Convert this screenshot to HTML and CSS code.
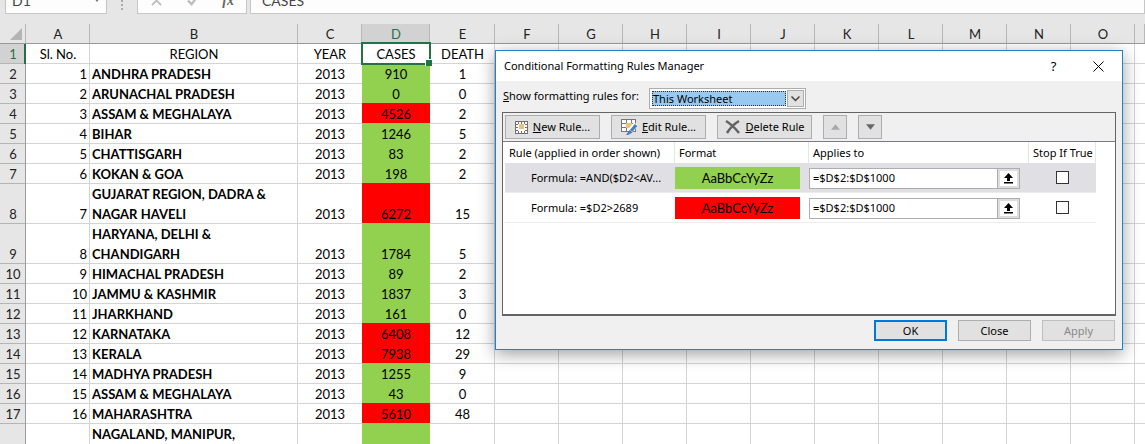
FILE: index.html
```html
<!DOCTYPE html>
<html lang="en">
<head>
<meta charset="utf-8">
<title>Conditional Formatting Rules Manager</title>
<link rel="stylesheet" href="styles.css">
</head>
<body>
<header class="formula-bar">
  <div class="name-box"><span>D1</span><svg class="caret" viewBox="0 0 8 5"><path d="M0 0h8L4 5z" fill="#777"/></svg></div>
  <div class="grip"><i></i><i></i><i></i></div>
  <div class="fx-box">
    <svg viewBox="0 0 12 12"><path d="M1 1l10 10M11 1L1 11" stroke="#bdbdbd" stroke-width="2" fill="none"/></svg>
    <svg viewBox="0 0 12 12"><path d="M1 6l4 4 6-8" stroke="#bdbdbd" stroke-width="2.5" fill="none"/></svg>
    <em>fx</em>
  </div>
  <div class="formula-text">CASES</div>
</header>
<table class="sheet">
  <colgroup><col class="w-head"><col class="w-std"><col class="w-region"><col class="w-std"><col class="w-cases"><col class="w-death"><col class="w-std"><col class="w-std"><col class="w-std"><col class="w-std"><col class="w-std"><col class="w-std"><col class="w-std"><col class="w-std"><col class="w-std"><col class="w-std"><col></colgroup>
  <thead>
    <tr><th class="corner"><svg viewBox="0 0 12 12"><path d="M12 0v12H0z" fill="#b4b4b4"/></svg></th><th>A</th><th>B</th><th>C</th><th class="active">D</th><th>E</th><th>F</th><th>G</th><th>H</th><th>I</th><th>J</th><th>K</th><th>L</th><th>M</th><th>N</th><th>O</th><th></th></tr>
  </thead>
  <tbody>
    <tr class="titles"><th class="active">1</th><td>Sl. No.</td><td>REGION</td><td>YEAR</td><td class="selected">CASES</td><td>DEATH</td><td class="blank" colspan="11"></td></tr>
    <tr><th>2</th><td>1</td><td>ANDHRA PRADESH</td><td>2013</td><td class="low">910</td><td>1</td><td class="blank" colspan="11"></td></tr>
    <tr><th>3</th><td>2</td><td>ARUNACHAL PRADESH</td><td>2013</td><td class="low">0</td><td>0</td><td class="blank" colspan="11"></td></tr>
    <tr><th>4</th><td>3</td><td>ASSAM &amp; MEGHALAYA</td><td>2013</td><td class="high">4526</td><td>2</td><td class="blank" colspan="11"></td></tr>
    <tr><th>5</th><td>4</td><td>BIHAR</td><td>2013</td><td class="low">1246</td><td>5</td><td class="blank" colspan="11"></td></tr>
    <tr><th>6</th><td>5</td><td>CHATTISGARH</td><td>2013</td><td class="low">83</td><td>2</td><td class="blank" colspan="11"></td></tr>
    <tr><th>7</th><td>6</td><td>KOKAN &amp; GOA</td><td>2013</td><td class="low">198</td><td>2</td><td class="blank" colspan="11"></td></tr>
    <tr><th>8</th><td>7</td><td>GUJARAT REGION, DADRA &amp;<br>NAGAR HAVELI</td><td>2013</td><td class="high">6272</td><td>15</td><td class="blank" colspan="11"></td></tr>
    <tr><th>9</th><td>8</td><td>HARYANA, DELHI &amp;<br>CHANDIGARH</td><td>2013</td><td class="low">1784</td><td>5</td><td class="blank" colspan="11"></td></tr>
    <tr><th>10</th><td>9</td><td>HIMACHAL PRADESH</td><td>2013</td><td class="low">89</td><td>2</td><td class="blank" colspan="11"></td></tr>
    <tr><th>11</th><td>10</td><td>JAMMU &amp; KASHMIR</td><td>2013</td><td class="low">1837</td><td>3</td><td class="blank" colspan="11"></td></tr>
    <tr><th>12</th><td>11</td><td>JHARKHAND</td><td>2013</td><td class="low">161</td><td>0</td><td class="blank" colspan="11"></td></tr>
    <tr><th>13</th><td>12</td><td>KARNATAKA</td><td>2013</td><td class="high">6408</td><td>12</td><td class="blank" colspan="11"></td></tr>
    <tr><th>14</th><td>13</td><td>KERALA</td><td>2013</td><td class="high">7938</td><td>29</td><td class="blank" colspan="11"></td></tr>
    <tr><th>15</th><td>14</td><td>MADHYA PRADESH</td><td>2013</td><td class="low">1255</td><td>9</td><td class="blank" colspan="11"></td></tr>
    <tr><th>16</th><td>15</td><td>ASSAM &amp; MEGHALAYA</td><td>2013</td><td class="low">43</td><td>0</td><td class="blank" colspan="11"></td></tr>
    <tr><th>17</th><td>16</td><td>MAHARASHTRA</td><td>2013</td><td class="high">5610</td><td>48</td><td class="blank" colspan="11"></td></tr>
    <tr><th></th><td></td><td>NAGALAND, MANIPUR,<br>&nbsp;</td><td></td><td class="low"></td><td></td><td class="blank" colspan="11"></td></tr>
  </tbody>
</table>

<section class="dialog" role="dialog" aria-labelledby="dlg-title">
  <div class="title-bar">
    <h1 id="dlg-title">Conditional Formatting Rules Manager</h1>
    <button class="plain" type="button">?</button>
    <button class="plain" type="button" aria-label="Close window"><svg class="x" viewBox="0 0 11 11"><path d="M.5 .5l10 10M10.5 .5l-10 10" stroke="#000" fill="none"/></svg></button>
  </div>
  <div class="scope">
    <label for="scope"><u>S</u>how formatting rules for:</label>
    <div class="combo">
      <select id="scope"><option>This Worksheet</option></select>
      <span class="drop"><svg viewBox="0 0 9 6"><path d="M.5 .5l4 4 4-4" stroke="#444" stroke-width="1.500" fill="none"/></svg></span>
    </div>
  </div>
  <div class="panel">
    <div class="toolbar">
      <button class="tool" type="button"><svg class="i13" viewBox="0 0 13 13"><path d="M0 0h13v13H0z" fill="#707070"/><path d="M1 1h2v2H1zM4 1h2v2H4zM7 1h2v2H7zM10 1h2v2h-2zM1 4h2v2H1zM1 7h2v2H1zM1 10h2v2H1zM10 4h2v2h-2zM10 7h2v2h-2zM4 10h2v2H4zM7 10h2v2H7zM10 10h2v2h-2z" fill="#fff"/><path d="M3 3h7v7H3z" fill="#fff"/><path d="M4 3h5v5H4z" fill="#ecc17e"/></svg><span><u>N</u>ew Rule...</span></button>
      <button class="tool" type="button"><svg class="i16" viewBox="0 0 16 16"><path d="M0 0h15v13H0z" fill="#777"/><path d="M1 1h4v3H1zM6 1h4v3H6zM11 1h3v3h-3zM1 5h4v3H1zM1 9h4v3H1zM6 9h4v3H6zM11 5h3v7h-3z" fill="#fff"/><path d="M5 4h6v5H5z" fill="#ecc17e"/><path d="M15 5l-6 7" stroke="#fff" stroke-width="5"/><path d="M15 6l-5 6" stroke="#4a7ebb" stroke-width="3"/><path d="M8.500 11l3 2.500L7 16H5z" fill="#4a7ebb"/></svg><span><u>E</u>dit Rule...</span></button>
      <button class="tool" type="button"><svg class="i16" viewBox="0 0 16 14"><path d="M1 1c5 3 9 7 13 12M14 1C9 4 5 8 2 13" stroke="#636363" stroke-width="2.500" fill="none"/></svg><span><u>D</u>elete Rule</span></button>
      <button class="tool small" type="button" aria-label="Move up"><svg viewBox="0 0 10 6"><path d="M5 0l5 6H0z" fill="#a8a8a8"/></svg></button>
      <button class="tool small" type="button" aria-label="Move down"><svg viewBox="0 0 10 6"><path d="M0 0h10L5 6z" fill="#686868"/></svg></button>
    </div>
    <table class="rules">
      <colgroup><col class="r-rule"><col class="r-format"><col class="r-applies"><col class="r-stop"></colgroup>
      <thead><tr><th>Rule (applied in order shown)</th><th>Format</th><th>Applies to</th><th>Stop If True</th></tr></thead>
      <tbody>
        <tr class="current"><td class="formula">Formula: =AND($D2&lt;AV...</td><td><div class="swatch green">AaBbCcYyZz</div></td><td><div class="range"><input type="text" aria-label="Applies to, rule 1" value="=$D$2:$D$1000"><button type="button" aria-label="Collapse dialog"><svg viewBox="0 0 9 11"><path d="M4.500 0L9 5H6v3H3V5H0zM0 9h9v1.500H0z"/></svg></button></div></td><td class="stop"><input type="checkbox" aria-label="Stop if true, rule 1"></td></tr>
        <tr><td class="formula">Formula: =$D2&gt;2689</td><td><div class="swatch red">AaBbCcYyZz</div></td><td><div class="range"><input type="text" aria-label="Applies to, rule 2" value="=$D$2:$D$1000"><button type="button" aria-label="Collapse dialog"><svg viewBox="0 0 9 11"><path d="M4.500 0L9 5H6v3H3V5H0zM0 9h9v1.500H0z"/></svg></button></div></td><td class="stop"><input type="checkbox" aria-label="Stop if true, rule 2"></td></tr>
      </tbody>
    </table>
  </div>
  <div class="actions">
    <button class="default" type="button">OK</button>
    <button type="button">Close</button>
    <button type="button" disabled>Apply</button>
  </div>
</section>
</body>
</html>
```

FILE: styles.css
```css
* { box-sizing: border-box; }
body { margin: 0; height: 100vh; overflow: hidden; background: #fff; font-family: "Lato", sans-serif; font-size: 13px; color: #000; }
svg { display: block; flex: none; }
button, input, select { font: inherit; color: inherit; }

.formula-bar { display: flex; height: 24px; padding: 0 0 10px 5px; background: #e6e6e6; color: #444; overflow: hidden; font-size: 14px; line-height: 16px; }
.formula-bar > div { display: flex; align-items: flex-end; height: 14px; }
.name-box, .fx-box, .formula-text { background: #fdfdfd; border: 1px solid #c6c6c6; border-top: 0; }
.name-box { width: 102px; padding: 0 6px 4px; justify-content: space-between; }
.name-box .caret { width: 6px; height: 4px; margin: 0 0 7px; }
.formula-bar .grip { width: 30px; flex-direction: column; align-items: center; gap: 2px; justify-content: flex-start; }
.grip i { width: 2px; height: 2px; background: #aaa; }
.fx-box { width: 110px; padding: 0 12px 4px 13px; justify-content: space-between; }
.fx-box svg { width: 11px; height: 11px; margin-bottom: 3px; }
.fx-box em { font-family: "Liberation Serif", serif; font-weight: bold; color: #666; }
.formula-text { flex: 1; margin-left: 3px; padding: 0 11px 4px; }

.sheet { width: 100%; table-layout: fixed; border-collapse: separate; border-spacing: 0; line-height: 20px; }
.w-head { width: 26px; }
.w-std { width: 64px; }
.w-region { width: 208px; }
.w-cases { width: 68px; }
.w-death { width: 65px; }
.sheet td, .sheet th { height: 20px; padding: 0; text-align: center; vertical-align: bottom; white-space: nowrap; }
.sheet td { box-shadow: inset -1px -1px #d4d4d4; }
.sheet td:nth-child(4) { box-shadow: inset 0 -1px #d4d4d4; }
.sheet th { background: #e6e6e6; font-weight: normal; color: #222; box-shadow: inset -1px 0 #9b9b9b, inset 0 -1px #b5b5b5; }
.sheet thead th { box-shadow: inset 0 -1px #999, inset -1px 0 #b8b8b8; }
.sheet .corner svg { width: 12px; height: 12px; margin: 0 0 4px 10px; }
.sheet th.active { background: #d2d2d2; color: #217346; }
.sheet tbody th.active { box-shadow: inset -2px 0 #217346, inset 0 -1px #b5b5b5; }
.sheet td:nth-child(2) { padding-right: 3px; text-align: right; }
.sheet td:nth-child(3) { padding-left: 2px; text-align: left; font-weight: bold; }
.sheet .titles td { padding: 0; text-align: center; font-weight: normal; }
.sheet .low { background: #92d050; box-shadow: 0 -1px #92d050; }
.sheet .high { background: #f00; box-shadow: 0 -1px #f00; }
.sheet td.blank { background: repeating-linear-gradient(to right, transparent 0 63px, #d4d4d4 63px 64px); box-shadow: inset 0 -1px #d4d4d4; }
.sheet .selected { position: relative; box-shadow: none; }
.selected::before { content: ""; position: absolute; inset: -2px -1px -1px -1px; border: 2px solid #217346; }
.selected::after { content: ""; position: absolute; right: -2px; bottom: -2px; width: 6px; height: 6px; background: #217346; border: solid #fff; border-width: 1px 0 0 1px; }

.dialog { position: absolute; left: 495px; top: 50px; width: 628px; background: #f0f0f0; border: 1px solid #1883d7; box-shadow: 0 4px 16px rgba(0,0,0,.38); font: 11px/16px "Noto Sans", sans-serif; }
.title-bar { display: flex; align-items: center; height: 30px; padding: 0 8px; background: #fff; }
.title-bar h1 { flex: 1; margin: 0; font-size: 11px; font-weight: normal; }
.plain { display: grid; place-items: center; width: 45px; height: 28px; padding: 0; border: 0; background: none; font-size: 13px; }
.plain:last-child { margin-right: -7px; }
.x { width: 11px; height: 11px; }
.scope { display: flex; align-items: flex-start; padding: 7px 7px 3px; }
.scope label { width: 146px; white-space: nowrap; }
.combo { display: flex; width: 157px; height: 21px; padding: 1px; border: 1px solid #adadad; background: #fff; }
.combo select { flex: 1; min-width: 0; margin: 1px; padding: 0; appearance: none; border: 1px dotted #333; border-radius: 0; background: #99c9ef; line-height: 14px; }
.drop { display: grid; place-items: center; width: 17px; border: 1px solid #adadad; background: #e1e1e1; }
.drop svg { width: 9px; height: 6px; }
.panel { margin: 0 6px; height: 204px; border: 1px solid #646464; border-bottom-width: 2px; background: #fff; }
.toolbar { display: flex; gap: 11px; padding: 2px; background: #f0f0f0; border-bottom: 1px solid #7a7a80; }
.tool { display: flex; align-items: center; justify-content: center; gap: 5px; width: 95px; height: 24px; padding: 0; border: 1px solid #adadad; background: #e1e1e1; white-space: nowrap; }
.small { width: 24px; }
.small svg { width: 9px; height: 6px; }
.i13 { width: 13px; height: 13px; }
.i16 { width: 16px; height: 16px; }
.rules { width: 591px; margin-left: 2px; table-layout: fixed; border-spacing: 0; }
.r-rule { width: 170px; }
.r-format { width: 134px; }
.r-applies { width: 220px; }
.rules th { height: 21px; padding: 0 4px; border-right: 1px solid #e5e5e5; text-align: left; font-weight: normal; white-space: nowrap; }
.rules td { height: 30px; padding: 1px 0 0; border-bottom: 1px solid #ececec; }
.rules .current td { background: #e0dfe4; }
.rules .formula { padding-left: 26px; white-space: nowrap; }
.swatch { width: 125px; height: 22px; text-align: center; line-height: 22px; font-family: "Lato", sans-serif; font-size: 13px; }
.green { background: #92d050; }
.red { background: #f00; }
.range { display: flex; width: 211px; height: 21px; border: 1px solid #adadad; background: #fff; }
.range input { flex: 1; min-width: 0; padding: 0 3px; border: 0; background: none; }
.range button { display: grid; place-items: center; width: 21px; padding: 0; border: 2px solid #ddd; background: #fff; box-shadow: -1px 0 #adadad; }
.range svg { width: 9px; height: 11px; }
.rules .stop { padding: 0; }
.stop input { display: block; appearance: none; width: 13px; height: 13px; margin: 0 auto; border: 1px solid #333; background: #fff; }
.actions { display: flex; justify-content: flex-end; gap: 11px; padding: 4px 7px 8px; }
.actions button { width: 73px; height: 21px; padding: 0; border: 1px solid #adadad; background: #e1e1e1; }
.actions .default { border: 2px solid #0078d7; }
.actions button:disabled { color: #888; border-color: #bfbfbf; }
```
